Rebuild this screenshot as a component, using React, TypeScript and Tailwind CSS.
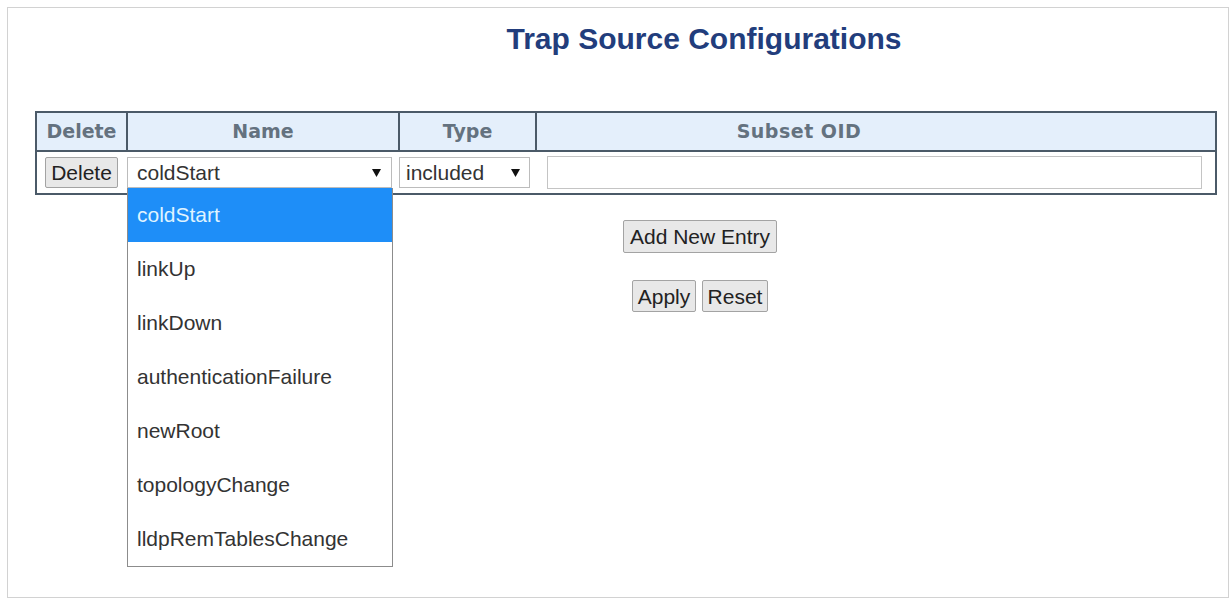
const items = [
  "coldStart",
  "linkUp",
  "linkDown",
  "authenticationFailure",
  "newRoot",
  "topologyChange",
  "lldpRemTablesChange",
]

function Arrow() {
  return (
    <svg width="9" height="10" viewBox="0 0 9 10" className="shrink-0">
      <path d="M0 1 L9 1 L4.5 9 Z" fill="#111" />
    </svg>
  )
}

function Btn({ label, className = "" }: { label: string; className?: string }) {
  return (
    <div
      className={`flex items-center justify-center border border-[#a3a3a3] bg-[#e8e8e8] rounded-[2px] text-[21px] leading-none text-[#222] ${className}`}
    >
      {label}
    </div>
  )
}

export default function App() {
  const font = { fontFamily: '"Liberation Sans", Arial, sans-serif' }
  return (
    <div className="relative w-[1231px] h-[603px] bg-white pt-[7px] overflow-hidden" style={font}>
      <div className="ml-[7px] w-[1222px] h-[591px] border border-[#d2d2d2]">
        {/* Title */}
        <div className="mt-[13px] pl-[172px] text-center">
          <h1 className="text-[30px] leading-[36px] font-bold text-[#223d7c]">Trap Source Configurations</h1>
        </div>

        {/* Table */}
        <div className="mt-[54px] ml-[27px] w-[1182px] border-2 border-[#4b5a68]">
          <div
            className="grid grid-cols-[89px_272px_137px_680px] h-[39px] bg-[#e4effb] border-b-2 border-[#4b5a68] text-[19px] font-bold text-[#64727f]"
            style={{ fontFamily: '"DejaVu Sans", Verdana, sans-serif' }}
          >
            <div className="flex items-center justify-center">Delete</div>
            <div className="flex items-center justify-center border-l-2 border-[#4b5a68]">Name</div>
            <div className="flex items-center justify-center border-l-2 border-[#4b5a68]">Type</div>
            <div className="flex items-center justify-center border-l-2 border-[#4b5a68] pr-[154px] tracking-[0.5px]">
              Subset OID
            </div>
          </div>
          <div className="grid grid-cols-[89px_272px_137px_680px] h-[41px] bg-white">
            <div className="flex items-center pl-[8px]">
              <Btn label="Delete" className="w-[73px] h-[31px]" />
            </div>
            <div className="flex items-center pl-[1px]">
              <div className="flex items-center justify-between w-[265px] h-[31px] border border-[#bcbcbc] bg-white pl-[9px] pr-[10px] text-[21px] text-[#333]">
                <span>coldStart</span>
                <Arrow />
              </div>
            </div>
            <div className="flex items-center pl-[1px]">
              <div className="flex items-center justify-between w-[131px] h-[31px] border border-[#bcbcbc] bg-white pl-[6px] pr-[9px] text-[21px] text-[#333]">
                <span>included</span>
                <Arrow />
              </div>
            </div>
            <div className="flex items-center pl-[12px]">
              <div className="w-[655px] h-[33px] border border-[#c4c4c4] bg-white" />
            </div>
          </div>
        </div>

        {/* Buttons */}
        <div className="pl-[164px] flex flex-col items-center">
          <Btn label="Add New Entry" className="mt-[25px] w-[154px] h-[33px]" />
          <div className="mt-[27px] flex gap-[6px]">
            <Btn label="Apply" className="w-[64px] h-[32px]" />
            <Btn label="Reset" className="w-[66px] h-[32px]" />
          </div>
        </div>
      </div>

      {/* Open dropdown list */}
      <div className="absolute left-[127px] top-[188px] w-[266px] border border-[#8c8c8c] border-t-0 bg-white">
        {items.map((it, i) => (
          <div
            key={it}
            className={`h-[54px] flex items-center pl-[9px] text-[21px] ${
              i === 0 ? "bg-[#1e8ef8] text-[#dff3ff]" : "text-[#333]"
            }`}
          >
            {it}
          </div>
        ))}
      </div>
    </div>
  )
}
